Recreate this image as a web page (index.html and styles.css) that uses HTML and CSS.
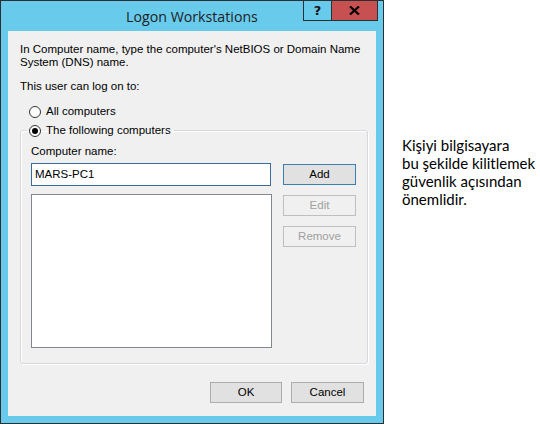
FILE: index.html
```html
<!DOCTYPE html>
<html>
<head>
<meta charset="utf-8">
<link rel="stylesheet" href="styles.css">
</head>
<body>
<div class="page">
  <div class="window">
    <div class="titlebar">
      <div class="spacer"></div>
      <div class="title">Logon Workstations</div>
      <div class="caption-buttons">
        <div class="cap-btn help">?</div>
        <div class="cap-btn close">
          <svg width="11" height="9" viewBox="0 0 11 9"><path d="M1 0.5 L10 8.5 M10 0.5 L1 8.5" stroke="#000" stroke-width="2.2" fill="none"/></svg>
        </div>
      </div>
    </div>
    <div class="content">
      <p class="intro">In Computer name, type the computer's NetBIOS or Domain Name<br>System (DNS) name.</p>
      <p class="prompt">This user can log on to:</p>
      <div class="radio-row first"><span class="radio"></span><span>All computers</span></div>
      <fieldset class="group">
        <legend class="radio-row"><span class="radio checked"></span><span>The following computers</span></legend>
        <div class="field-label">Computer name:</div>
        <div class="group-body">
          <div class="left-col">
            <div class="textbox">MARS-PC1</div>
            <div class="listbox"></div>
          </div>
          <div class="right-col">
            <div class="btn default">Add</div>
            <div class="btn disabled">Edit</div>
            <div class="btn disabled">Remove</div>
          </div>
        </div>
      </fieldset>
      <div class="footer">
        <div class="btn footer-btn">OK</div>
        <div class="btn footer-btn cancel">Cancel</div>
      </div>
    </div>
  </div>
  <div class="note">
    Kişiyi bilgisayara<br>
    bu şekilde kilitlemek<br>
    güvenlik açısından<br>
    önemlidir.
  </div>
</div>
</body>
</html>
```
FILE: styles.css
```css
* { box-sizing: border-box; }
html, body { margin: 0; padding: 0; background: #fff; }
.page { display: flex; width: 540px; height: 424px; }

.window {
  width: 384px;
  height: 424px;
  flex: none;
  border: 1px solid #2b2f33;
  background: #69cbec;
  padding: 0 7px 7px;
  display: flex;
  flex-direction: column;
}
.titlebar {
  height: 30px;
  margin: 0 -7px;
  display: grid;
  grid-template-columns: 1fr auto 1fr;
  align-items: start;
}
.title {
  font-family: "Open Sans", sans-serif;
  font-size: 14.2px;
  color: #1e1e1e;
  line-height: 20px;
  padding-top: 6px;
  white-space: nowrap;
}
.caption-buttons { justify-self: end; display: flex; margin-right: 5px; }
.cap-btn {
  height: 20px;
  display: flex;
  align-items: center;
  justify-content: center;
  border-bottom: 1px solid #2b2f33;
  border-left: 1px solid #2b2f33;
}
.help {
  width: 28px;
  font-family: "DejaVu Sans", sans-serif;
  font-weight: bold;
  font-size: 13px;
  color: #111;
}
.close {
  width: 47px;
  background: #c75050;
  border-right: 1px solid #2b2f33;
}

.content {
  flex: 1;
  background: #f0f0f0;
  padding: 12px 12px 0 12px;
  font-family: "Liberation Sans", Arial, sans-serif;
  font-size: 11.5px;
  line-height: 13px;
  color: #000;
  display: flex;
  flex-direction: column;
}
.content p { margin: 0; }
.prompt { margin-top: 11px !important; }
.radio-row { display: flex; align-items: center; gap: 5px; height: 13px; }
.radio-row.first { margin: 12px 0 0 9px; }
.radio {
  width: 12px; height: 12px;
  border: 1px solid #333;
  border-radius: 50%;
  background: #fff;
  display: inline-flex;
  align-items: center;
  justify-content: center;
}
.radio.checked::after {
  content: "";
  width: 6px; height: 6px;
  border-radius: 50%;
  background: #000;
}
.group {
  margin: 6px 0 0 0;
  width: 347px;
  border: 1px solid #d5d9de;
  border-radius: 3px;
  box-shadow: 1px 1px 0 #fff, inset 1px 1px 0 #fff;
  padding: 8px 11px 15px 10px;
}
.group legend {
  padding: 0 3px 0 2px;
  margin-left: -4px;
}
.field-label { height: 13px; }
.group-body { display: flex; gap: 11px; margin-top: 5px; }
.left-col { display: flex; flex-direction: column; gap: 8px; }
.textbox {
  width: 240px; height: 23px;
  background: #fff;
  border: 1px solid #3a6c9a;
  padding: 4px 3px;
}
.listbox {
  width: 241px; height: 154px;
  background: #fff;
  border: 1px solid #828790;
}
.right-col { display: flex; flex-direction: column; gap: 10px; padding-top: 1px; }
.btn {
  width: 73px; height: 21px;
  display: flex; align-items: center; justify-content: center;
  background: #e1e1e1;
  border: 1px solid #adadad;
  color: #000;
}
.btn.default { border-color: #3c7fb1; }
.btn.disabled { background: #f0f0f0; border-color: #bfbfbf; color: #a0a0a0; }
.footer { display: flex; justify-content: flex-end; gap: 9px; margin-top: 18px; padding-right: 0; }
.footer-btn { width: 72px; }
.footer-btn.cancel { width: 73px; }

.note {
  padding: 136px 0 0 18px;
  font-family: "Lato", sans-serif;
  font-size: 15px;
  line-height: 18px;
  color: #000;
  white-space: nowrap;
}
```
